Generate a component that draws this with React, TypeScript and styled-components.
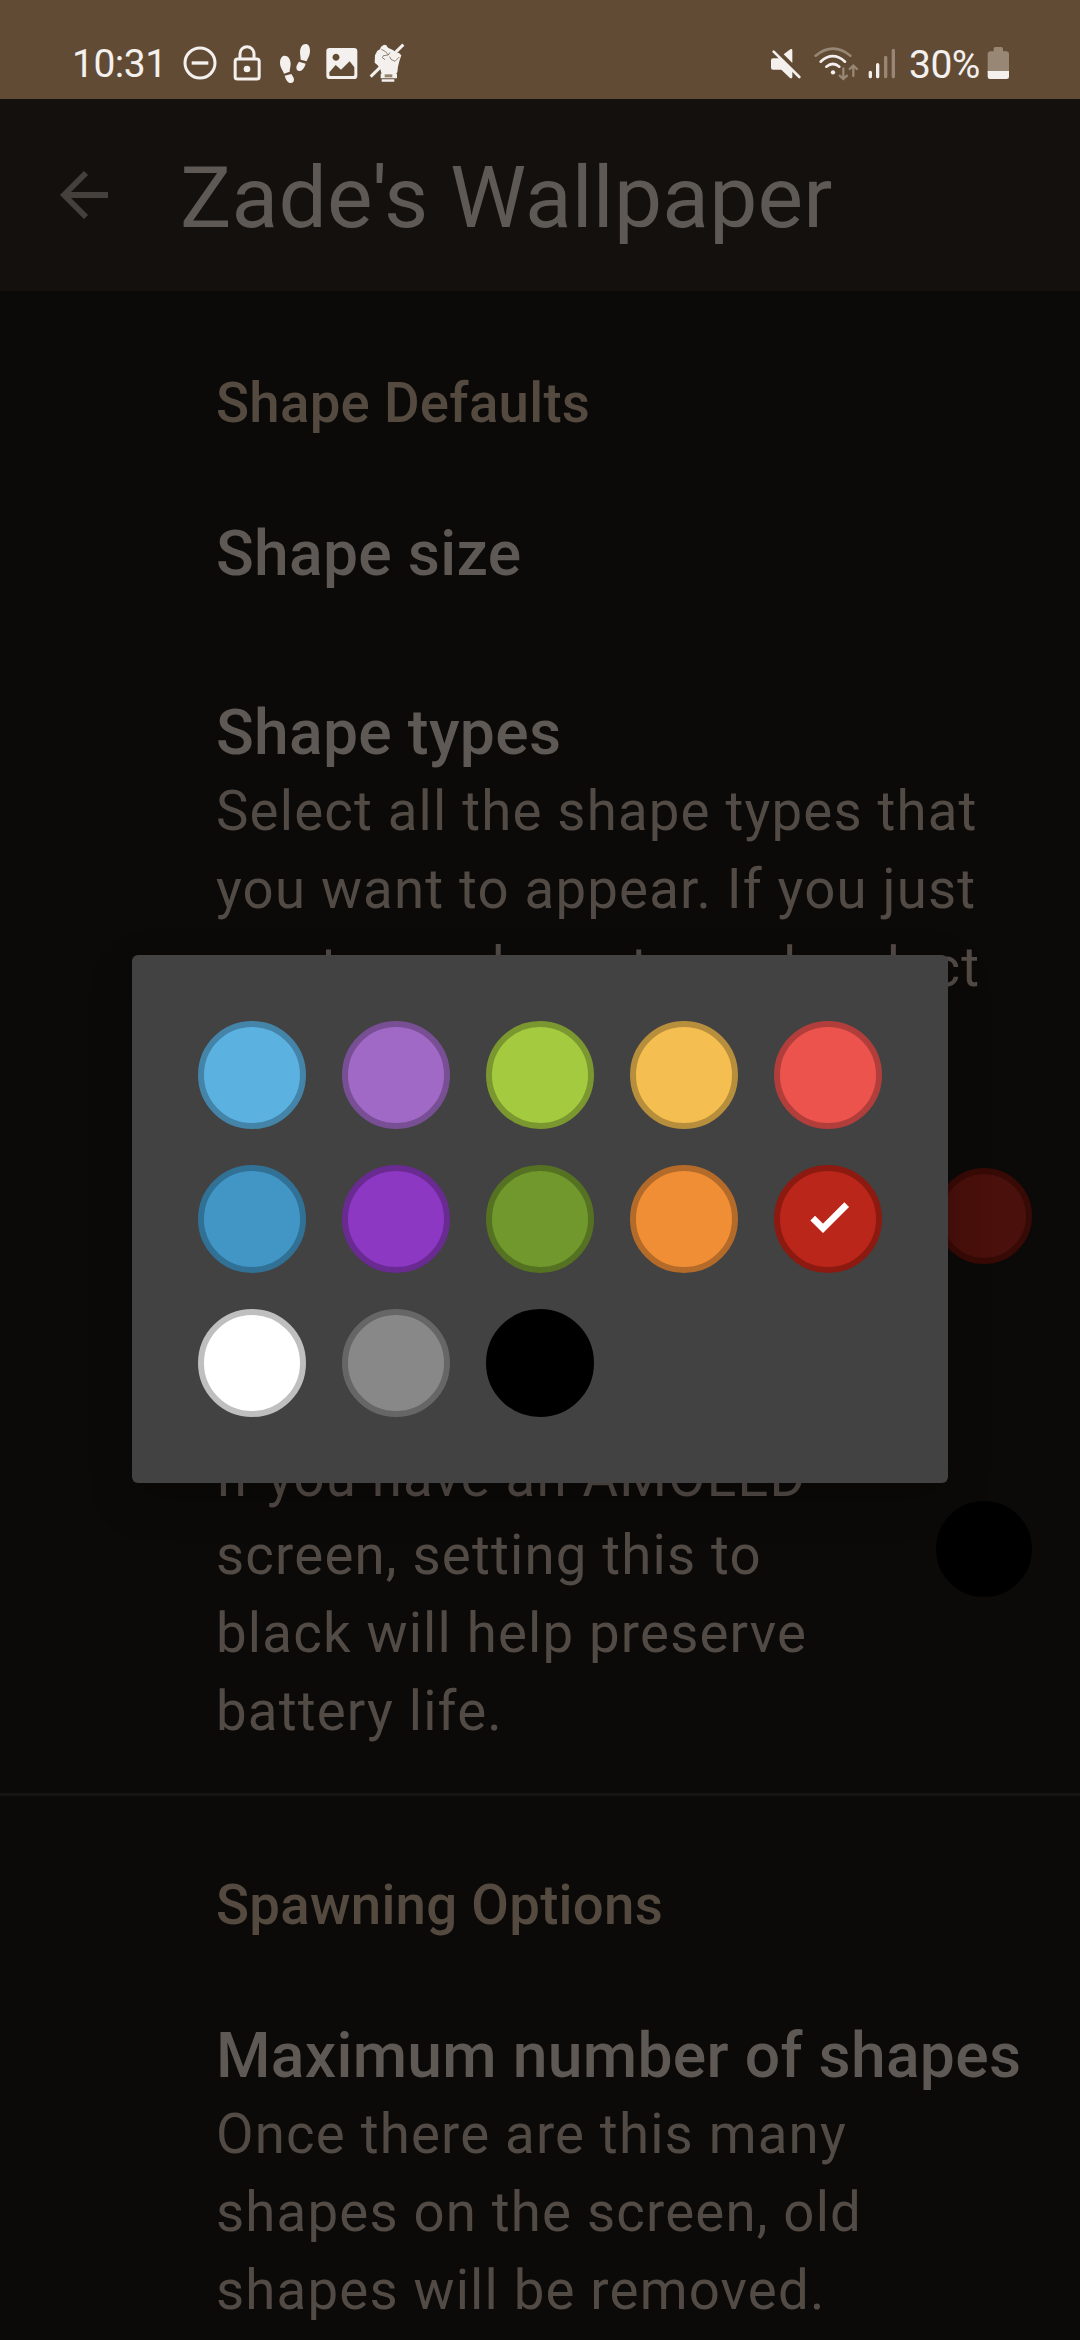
import React from "react";
import styled, { createGlobalStyle, css } from "styled-components";

const GlobalStyle = createGlobalStyle`
  *, *::before, *::after { box-sizing: border-box; }
  html, body { margin: 0; padding: 0; background: #0b0a08; }
  body { width: 1080px; height: 2340px; overflow: hidden; font-family: Roboto, "Noto Sans", sans-serif; }
`;

const Screen = styled.div`
  position: relative;
  display: flex;
  flex-direction: column;
  width: 1080px;
  height: 2340px;
  overflow: hidden;
  background: #0b0a08;
`;

const StatusBar = styled.header`
  display: flex;
  justify-content: space-between;
  height: 99px;
  flex: none;
  padding: 0 70px 0 72px;
  background: #614b35;
  color: #f3f0ee;
`;

const StatusGroup = styled.div`
  display: flex;
  align-items: flex-start;
`;

const StatusText = styled.span<{ $width: number; $top: number; $left?: number }>`
  flex: none;
  width: ${(p) => p.$width}px;
  margin-left: ${(p) => p.$left ?? 0}px;
  padding-top: ${(p) => p.$top}px;
  font-size: 39px;
  line-height: 46px;
  letter-spacing: -0.5px;
  white-space: nowrap;
`;

const Glyph = styled.svg<{ $left?: number; $top: number }>`
  display: block;
  flex: none;
  margin-left: ${(p) => p.$left ?? 0}px;
  margin-top: ${(p) => p.$top}px;
`;

const AppBar = styled.div`
  display: flex;
  align-items: center;
  height: 192px;
  flex: none;
  padding-left: 60px;
  background: #14100d;
`;

const Title = styled.h1`
  margin: 6px 0 0 72px;
  font-size: 85.8px;
  line-height: 110px;
  font-weight: 400;
  letter-spacing: 0.2px;
  color: #5e5955;
  white-space: nowrap;
`;

const Section = styled.section<{ $top: number; $divided?: boolean }>`
  display: flex;
  flex-direction: column;
  flex: none;
  padding-top: ${(p) => p.$top}px;
  ${(p) => p.$divided && css`border-top: 3px solid #171513;`}
`;

const Category = styled.h2`
  margin: 0;
  padding-left: 216px;
  font-size: 54.6px;
  line-height: 78px;
  font-weight: 500;
  letter-spacing: 0.27px;
  color: #544a40;
`;

const Preference = styled.div<{ $height: number; $top?: number; $bottom?: number; $center?: boolean }>`
  display: flex;
  align-items: ${(p) => (p.$center ? "center" : "flex-start")};
  justify-content: space-between;
  height: ${(p) => p.$height}px;
  flex: none;
  padding: ${(p) => p.$top ?? 0}px 48px ${(p) => p.$bottom ?? 0}px 216px;
`;

const PrefText = styled.div<{ $top?: number }>`
  flex: 1;
  display: flex;
  flex-direction: column;
  padding-top: ${(p) => p.$top ?? 0}px;
`;

const PrefTitle = styled.h3`
  margin: 0;
  font-size: 62.4px;
  line-height: 78px;
  font-weight: 500;
  letter-spacing: 0.3px;
  color: #5e5955;
  white-space: nowrap;
`;

const Summary = styled.p`
  margin: 0;
  font-size: 54.6px;
  line-height: 78px;
  letter-spacing: 1.17px;
  color: #524a45;
  white-space: pre-line;
`;

const Swatch = styled.span<{ $fill: string; $ring: string; $size: number }>`
  display: grid;
  place-items: center;
  flex: none;
  width: ${(p) => p.$size}px;
  height: ${(p) => p.$size}px;
  border-radius: 50%;
  border: 6px solid ${(p) => p.$ring};
  background: ${(p) => p.$fill};
`;

const Dialog = styled.div`
  position: absolute;
  left: 132px;
  top: 955px;
  display: grid;
  grid-template-columns: repeat(5, 108px);
  grid-auto-rows: 108px;
  gap: 36px;
  width: 816px;
  height: 528px;
  padding: 66px;
  border-radius: 6px;
  background: #424242;
  box-shadow: 0 16px 44px rgba(0, 0, 0, 0.22);
`;

const PALETTE: { fill: string; ring: string; checked?: boolean }[] = [
  { fill: "#5bb1e0", ring: "#4484a8" },
  { fill: "#a069c5", ring: "#784f94" },
  { fill: "#a4cb40", ring: "#7b9830" },
  { fill: "#f4be50", ring: "#b78e3c" },
  { fill: "#ec534d", ring: "#b13e3a" },
  { fill: "#4296c6", ring: "#317195" },
  { fill: "#8c38c2", ring: "#692a92" },
  { fill: "#71982d", ring: "#557222" },
  { fill: "#f08e35", ring: "#b46a28" },
  { fill: "#bb261a", ring: "#8c1a10", checked: true },
  { fill: "#ffffff", ring: "#bfbfbf" },
  { fill: "#888888", ring: "#666666" },
  { fill: "#000000", ring: "#000000" },
];

const SHAPE_SUMMARY =
  "Select all the shape types that\nyou want to appear. If you just\nwant one shape type, deselect";
const BACKGROUND_SUMMARY =
  "If you have an AMOLED\nscreen, setting this to\nblack will help preserve\nbattery life.";
const MAXIMUM_SUMMARY =
  "Once there are this many\nshapes on the screen, old\nshapes will be removed.";

const DoNotDisturb = () => (
  <Glyph $top={46} width={34} height={34} viewBox="400 49 102 102" fill="none" stroke="currentColor">
    <circle cx="451" cy="100" r="45" strokeWidth="9" />
    <path d="M426 100h50" strokeWidth="10" />
  </Glyph>
);

const Lock = () => (
  <Glyph $left={16} $top={45} width={28} height={36} viewBox="550 44 84 108" fill="none" stroke="currentColor" strokeWidth="9">
    <rect x="556.500" y="86" width="72" height="60" rx="7" />
    <path d="M571 86V70a21 21 0 0 1 42 0v16" />
    <circle cx="592" cy="116" r="10" fill="currentColor" stroke="none" />
  </Glyph>
);

const Footsteps = () => (
  <Glyph $left={18} $top={43} width={33} height={41} viewBox="687 39 99 123" fill="currentColor">
    <path d="M690 98c0-13 6-21 14-21 10 0 18 10 18 25 0 8-3 14-3 23l-17 6c-3-11-12-18-12-33z" />
    <path d="M704 137l20-5c4 6 8 12 8 17 0 6-4 10-10 10-9 0-15-11-18-22z" />
    <path d="M780 62c0-12-5-20-13-20-10 0-17 10-17 25 0 8 2 13 2 22l18 5c3-10 10-17 10-32z" />
    <path d="M767 101l-20-6c-4 6-8 11-8 18 0 6 4 10 9 10 9 0 16-11 19-22z" />
  </Glyph>
);

const Picture = () => (
  <Glyph $left={14} $top={47} width={32} height={33} viewBox="827 51 96 99" fill="currentColor">
    <path
      fillRule="evenodd"
      d="M838 54h73a10 10 0 0 1 10 10v73a10 10 0 0 1-10 10h-73a10 10 0 0 1-10-10V64a10 10 0 0 1 10-10zM857 71a10.500 10.500 0 1 0 0.010 0zM837 127v7q0 4 4 4h67q4 0 4-4v-22l-14-18-26 25-16-14z"
    />
  </Glyph>
);

const HandWand = () => (
  <Glyph $left={11} $top={43} width={36} height={40} viewBox="958 39 108 120" fill="currentColor">
    <path d="M963 140L1061 44" stroke="currentColor" strokeWidth="9" />
    <path d="M976 76l7-14 8-4 3-8 9-6 7 2 5 7 16 8 8 9 8-2 8 8-6 18-4 16-2 17-5 6h-42l-4-15-8-12-9-8z" />
    <path d="M993 131h49v14h-49zM996 148h38v7h-38z" />
    <path d="M995 58l13 7 8 10-15 2-3 6 8 6M1016 75l5-8M1024 88l12 6 13-13M1024 88l-4-8" fill="none" stroke="#614b35" strokeWidth="2" />
    <path d="M1005 133h23v9h-23z" fill="#95846f" />
  </Glyph>
);

const Muted = () => (
  <Glyph $top={48} width={32} height={32} viewBox="60 54 96 96" fill="currentColor">
    <path d="M69 85h22l36 36v21q-2 5-7 2L94 119H69q-6 0-6-6V91q0-6 6-6zM101 73l20-15q6-3 6 3v38z" />
    <path d="M71 65l77 76" stroke="currentColor" strokeWidth="8" strokeLinecap="round" />
  </Glyph>
);

const Wifi = () => (
  <Glyph $left={11} $top={46} width={46} height={36} viewBox="190 48 138 108" fill="none" stroke="currentColor" strokeWidth="8" strokeLinecap="round">
    <path d="M198 77q52-42 104 0" stroke="#988775" />
    <path d="M213 95q36-33 73 0" />
    <path d="M230 110q20-16 39 0" />
    <circle cx="250" cy="127" r="6.500" fill="currentColor" stroke="none" />
    <g stroke="#988775" strokeWidth="7">
      <path d="M281 115v31M270 137l11 10 11-10M311 138v-29M300 117l11-10 11 10" />
    </g>
  </Glyph>
);

const Signal = () => (
  <Glyph $left={9} $top={48} width={29} height={32} viewBox="353 54 87 96" fill="none" stroke="currentColor" strokeWidth="10" strokeLinecap="round">
    <path d="M360 127v13M382 104v36" />
    <path d="M406 82v58M429 61v79" stroke="#988775" />
  </Glyph>
);

const Battery = () => (
  <Glyph $top={47} width={23} height={33} viewBox="712 51 69 99">
    <path d="M732 56q0-5 5-5h18q5 0 5 5v8h9q9 0 9 9v55h-64V73q0-9 9-9h9z" fill="#988775" />
    <path d="M714 123h64v17q0 7-7 7h-50q-7 0-7-7z" fill="currentColor" />
  </Glyph>
);

const BackArrow = () => (
  <Glyph $top={0} width={48} height={48} viewBox="0 0 48 48" fill="none" stroke="#45403b" strokeWidth="5.800">
    <path d="M48 24H5M26 2L4 24l22 22" />
  </Glyph>
);

const Check = () => (
  <Glyph $top={0} width={44} height={36} viewBox="-2 -2 44 36" fill="none" stroke="#fff" strokeWidth="6.600">
    <path d="M4.700 15.200L15 25.400 38.700 1.700" />
  </Glyph>
);

export default function App() {
  return (
    <Screen>
      <GlobalStyle />
      <StatusBar>
        <StatusGroup>
          <StatusText $width={111} $top={41}>10:31</StatusText>
          <DoNotDisturb />
          <Lock />
          <Footsteps />
          <Picture />
          <HandWand />
        </StatusGroup>
        <StatusGroup>
          <Muted />
          <Wifi />
          <Signal />
          <StatusText $width={78} $top={42} $left={12}>30%</StatusText>
          <Battery />
        </StatusGroup>
      </StatusBar>

      <AppBar>
        <BackArrow />
        <Title>Zade's Wallpaper</Title>
      </AppBar>

      <Section $top={73}>
        <Category>Shape Defaults</Category>
        <Preference $height={179} $top={73}>
          <PrefTitle>Shape size</PrefTitle>
        </Preference>
        <Preference $height={479} $top={73}>
          <PrefText>
            <PrefTitle>Shape types</PrefTitle>
            <Summary>{SHAPE_SUMMARY}</Summary>
          </PrefText>
        </Preference>
        <Preference $height={232} $center>
          <PrefText />
          <Swatch $size={96} $fill="#4a100b" $ring="#380a06" />
        </Preference>
        <Preference $height={461} $bottom={27} $center>
          <PrefText $top={90}>
            <Summary>{BACKGROUND_SUMMARY}</Summary>
          </PrefText>
          <Swatch $size={96} $fill="#000" $ring="#000" />
        </Preference>
      </Section>

      <Section $top={70} $divided>
        <Category>Spawning Options</Category>
        <Preference $height={400} $top={73}>
          <PrefText>
            <PrefTitle>Maximum number of shapes</PrefTitle>
            <Summary>{MAXIMUM_SUMMARY}</Summary>
          </PrefText>
        </Preference>
      </Section>

      <Dialog role="dialog">
        {PALETTE.map((c) => (
          <Swatch key={c.fill} $size={108} $fill={c.fill} $ring={c.ring}>
            {c.checked && <Check />}
          </Swatch>
        ))}
      </Dialog>
    </Screen>
  );
}
